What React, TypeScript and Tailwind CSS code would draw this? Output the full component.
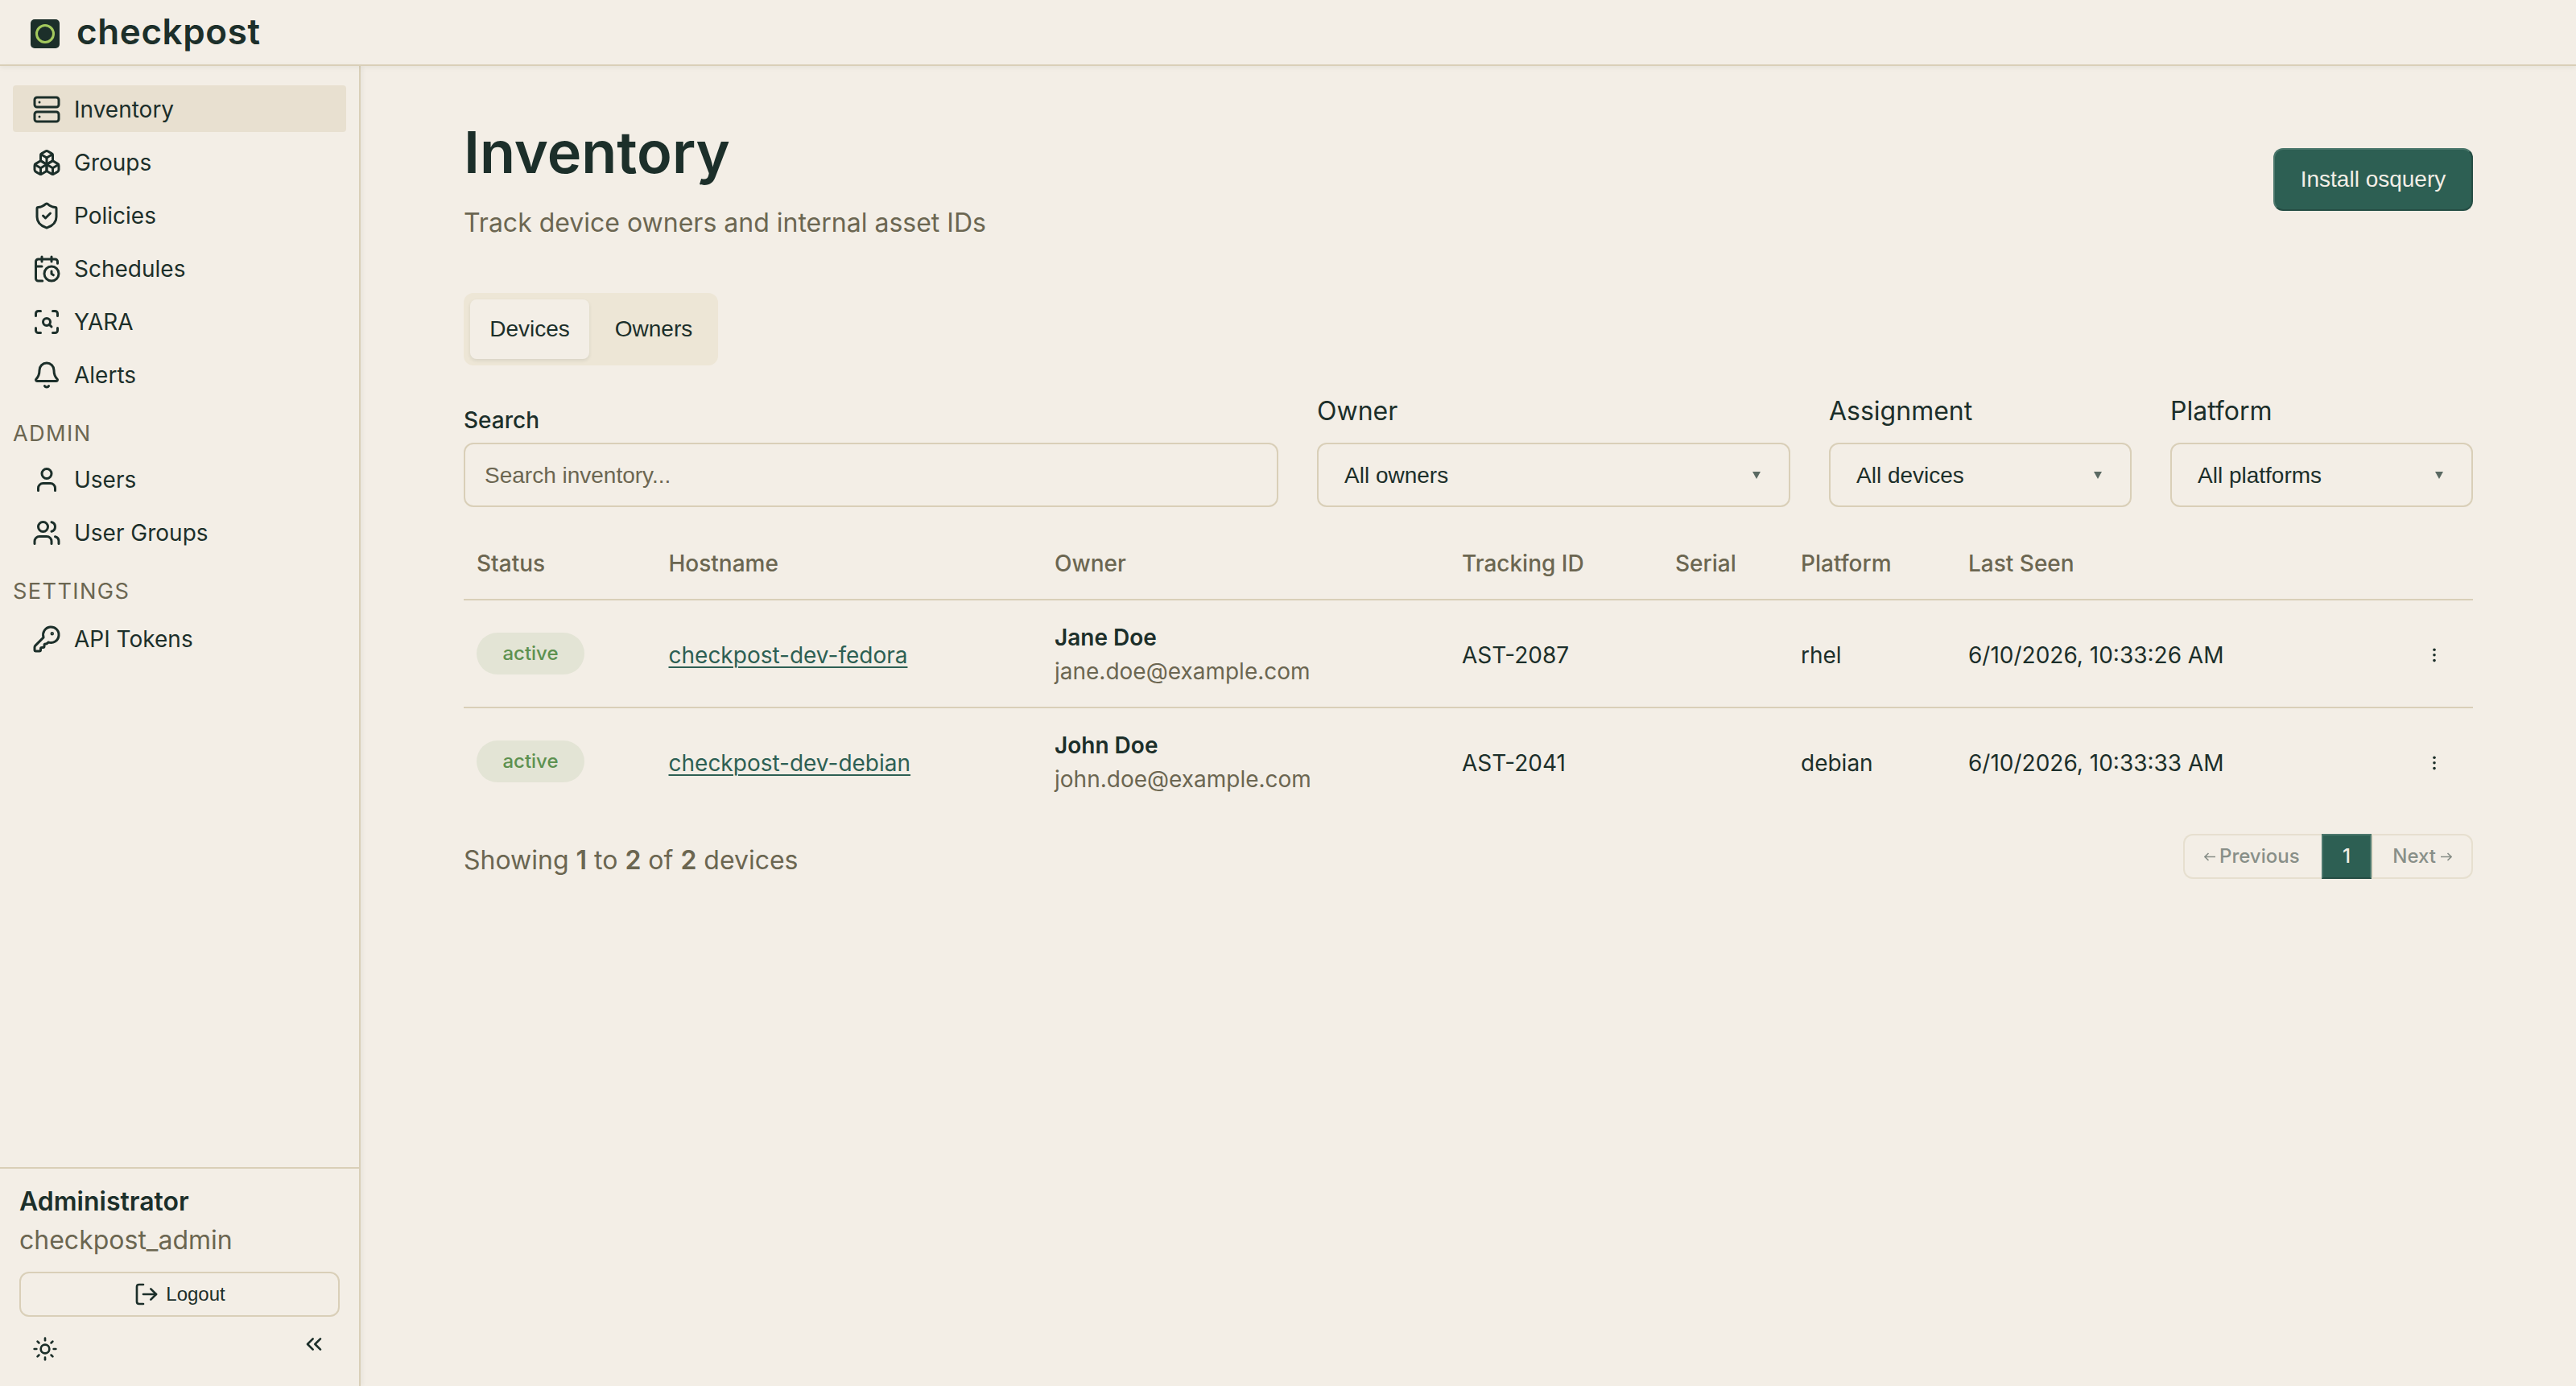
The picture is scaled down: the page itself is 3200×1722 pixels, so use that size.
import type { ReactNode } from 'react';
import {
  Bell,
  Boxes,
  CalendarClock,
  ChevronsLeft,
  KeyRound,
  LogOut,
  ScanSearch,
  Server,
  ShieldCheck,
  Sun,
  User,
  Users,
  type LucideIcon,
} from 'lucide-react';

interface NavItem {
  label: string;
  icon: LucideIcon;
  active?: boolean;
}

interface Device {
  hostname: string;
  owner: string;
  email: string;
  trackingId: string;
  serial: string;
  platform: string;
  lastSeen: string;
}

const mainNav: NavItem[] = [
  { label: 'Inventory', icon: Server, active: true },
  { label: 'Groups', icon: Boxes },
  { label: 'Policies', icon: ShieldCheck },
  { label: 'Schedules', icon: CalendarClock },
  { label: 'YARA', icon: ScanSearch },
  { label: 'Alerts', icon: Bell },
];

const adminNav: NavItem[] = [
  { label: 'Users', icon: User },
  { label: 'User Groups', icon: Users },
];

const settingsNav: NavItem[] = [{ label: 'API Tokens', icon: KeyRound }];

const devices: Device[] = [
  {
    hostname: 'checkpost-dev-fedora',
    owner: 'Jane Doe',
    email: 'jane.doe@example.com',
    trackingId: 'AST-2087',
    serial: '',
    platform: 'rhel',
    lastSeen: '6/10/2026, 10:33:26 AM',
  },
  {
    hostname: 'checkpost-dev-debian',
    owner: 'John Doe',
    email: 'john.doe@example.com',
    trackingId: 'AST-2041',
    serial: '',
    platform: 'debian',
    lastSeen: '6/10/2026, 10:33:33 AM',
  },
];

function NavList({ items }: { items: NavItem[] }) {
  return (
    <ul className="flex flex-col gap-2">
      {items.map(({ label, icon: Icon, active }) => (
        <li key={label}>
          <a
            className={`flex h-[58px] items-center gap-4 rounded-[4px] px-6 pt-px text-[28px] leading-[42px] ${
              active ? 'bg-[#e8e0d0]' : ''
            }`}
          >
            <Icon size={36} strokeWidth={2} />
            <span className="pt-px">{label}</span>
          </a>
        </li>
      ))}
    </ul>
  );
}

function NavHeading({ children }: { children: ReactNode }) {
  return (
    <h2 className="pt-0.5 text-[27.2px] leading-[42px] tracking-[0.05em] text-[#6b6651] uppercase">
      {children}
    </h2>
  );
}

function Sidebar() {
  return (
    <aside className="flex w-[448px] shrink-0 flex-col border-r-2 border-[#d9cfb8] shadow-[2px_0_6px_rgba(28,47,42,0.06)]">
      <nav className="flex-1 px-4 pt-6">
        <NavList items={mainNav} />
        <div className="mt-[22px] mb-[6px]">
          <NavHeading>Admin</NavHeading>
        </div>
        <NavList items={adminNav} />
        <div className="mt-[22px] mb-[8px]">
          <NavHeading>Settings</NavHeading>
        </div>
        <NavList items={settingsNav} />
      </nav>

      <div className="h-[272px] border-t-2 border-[#d9cfb8] px-6 pt-4">
        <div className="pt-px text-[32px] leading-[48px] font-semibold">Administrator</div>
        <div className="text-[32px] leading-[48px] text-[#6b6651]">checkpost_admin</div>
        <button className="mt-[15px] flex h-14 w-full items-center justify-center gap-2 rounded-xl border-2 border-[#d9cfb8] font-['Liberation_Sans',sans-serif] text-2xl leading-none">
          <LogOut size={32} strokeWidth={2} />
          Logout
        </button>
        <div className="flex items-start justify-between px-4 pt-[18px]">
          <Sun size={32} strokeWidth={2} className="mt-1.5" />
          <ChevronsLeft size={32} strokeWidth={2} />
        </div>
      </div>
    </aside>
  );
}

function SelectField({ label, value, className }: { label: string; value: string; className: string }) {
  return (
    <div className={className}>
      <div className="mb-[15px] pt-px text-[32px] leading-[48px]">{label}</div>
      <button className="flex h-20 w-full items-center justify-between rounded-xl border-2 border-[#d9cfb8] pt-px pr-[35px] pl-8 font-['Liberation_Sans',sans-serif] text-[28px] leading-none">
        <span>{value}</span>
        <svg width="10" height="9" viewBox="0 0 10 9" className="text-[#5a6962]">
          <path d="M0 0h10L5 9z" fill="currentColor" />
        </svg>
      </button>
    </div>
  );
}

function DeviceTable() {
  return (
    <table className="w-full table-fixed border-separate border-spacing-0 text-left text-[28px] leading-[42px]">
      <colgroup>
        <col className="w-[238.5px]" />
        <col className="w-[479.5px]" />
        <col className="w-[506px]" />
        <col className="w-[265px]" />
        <col className="w-[156px]" />
        <col className="w-[208px]" />
        <col />
        <col className="w-[96px]" />
      </colgroup>
      <thead>
        <tr className="text-[#6b6651]">
          {['Status', 'Hostname', 'Owner', 'Tracking ID', 'Serial', 'Platform', 'Last Seen', ''].map((title, i) => (
            <th key={i} className="h-[92px] border-b-2 border-[#d9cfb8] px-4 pt-0.5 font-medium">
              {title}
            </th>
          ))}
        </tr>
      </thead>
      <tbody>
        {devices.map((device) => (
          <tr
            key={device.hostname}
            className="last:[&>td]:h-[132px] [&>td]:border-[#d9cfb8] not-last:[&>td]:h-[134px] not-last:[&>td]:border-b-2"
          >
            <td className="px-4">
              <span className="flex h-[52px] w-[134px] items-center justify-center rounded-full bg-[#e3e4d5] pb-px text-2xl font-medium text-[#5d9150]">
                active
              </span>
            </td>
            <td className="px-4 pt-1">
              <a className="text-[#2d5f53] underline decoration-2 underline-offset-4">{device.hostname}</a>
            </td>
            <td className="px-4 pt-0.5">
              <div className="font-semibold">{device.owner}</div>
              <div className="text-[#6b6651]">{device.email}</div>
            </td>
            <td className="px-4 pt-1">{device.trackingId}</td>
            <td className="px-4 pt-1">{device.serial}</td>
            <td className="px-4 pt-1">{device.platform}</td>
            <td className="px-4 pt-1">{device.lastSeen}</td>
            <td className="pt-1">
              <svg width="4" height="18" viewBox="0 0 4 18" className="mx-auto" fill="currentColor">
                <circle cx="2" cy="2.2" r="1.8" />
                <circle cx="2" cy="8.8" r="1.8" />
                <circle cx="2" cy="15.6" r="1.8" />
              </svg>
            </td>
          </tr>
        ))}
      </tbody>
    </table>
  );
}

function PageArrow({ className }: { className?: string }) {
  return (
    <svg
      width="14"
      height="11"
      viewBox="0 0 14 11"
      fill="none"
      stroke="currentColor"
      strokeWidth="1.6"
      className={`shrink-0 ${className ?? ''}`}
    >
      <path d="M0 5.5h13M8.5 1l4.5 4.5L8.5 10" />
    </svg>
  );
}

export default function App() {
  return (
    <div className="flex h-[1722px] w-[3200px] flex-col overflow-hidden bg-[#f3eee6] font-['Inter',sans-serif] text-[#1c2f2a]">
      <header className="relative z-10 flex h-[82px] shrink-0 items-center border-b-2 border-[#d9cfb8] pl-[38px] shadow-[0_2px_6px_rgba(28,47,42,0.06)]">
        <svg width="36" height="36" viewBox="0 0 36 36" className="mt-[3px]">
          <rect width="36" height="36" rx="5" fill="#1c2f2a" />
          <circle cx="18" cy="18" r="10.5" fill="none" stroke="#a3c95d" strokeWidth="3" />
        </svg>
        <span className="mb-[3px] ml-[21px] text-[44px] leading-none font-semibold tracking-[0.6px]">checkpost</span>
      </header>

      <div className="flex min-h-0 flex-1">
        <Sidebar />

        <main className="flex-1 px-32 pt-16">
          {/* Title */}
          <div className="flex h-[154px] items-center justify-between">
            <div>
              <h1 className="text-[72px] leading-[86px] font-semibold">Inventory</h1>
              <p className="mt-5 pt-0.5 text-[32px] leading-[46px] text-[#6b6651]">
                Track device owners and internal asset IDs
              </p>
            </div>
            <button className="h-[78px] w-[248px] rounded-xl border-2 border-t-[#4b776c] border-r-[#254d44] border-b-[#254d44] border-l-[#4b776c] bg-[#2d5f53] font-['Liberation_Sans',sans-serif] text-[28px] leading-none text-[#f3eee6]">
              Install osquery
            </button>
          </div>

          {/* Tabs */}
          <div className="mt-16 flex h-[90px] w-[316px] gap-2 rounded-xl bg-[#ede6d6] p-2 font-['Liberation_Sans',sans-serif] text-[28px] leading-none">
            <button className="w-[148px] rounded-lg bg-[#f3eee6] shadow-[0_2px_4px_rgba(28,47,42,0.1)]">Devices</button>
            <button className="flex-1">Owners</button>
          </div>

          {/* Filters */}
          <div className="mt-8 flex items-end gap-12">
            <div className="w-[1012px]">
              <div className="mb-[7px] text-[28px] leading-[42px] font-medium">Search</div>
              <div className="flex h-20 items-center rounded-xl border-2 border-[#d9cfb8] px-6 pt-px font-['Liberation_Sans',sans-serif] text-[28px] leading-none text-[#6b6651]">
                Search inventory...
              </div>
            </div>
            <SelectField label="Owner" value="All owners" className="w-[588px]" />
            <SelectField label="Assignment" value="All devices" className="w-[376px]" />
            <SelectField label="Platform" value="All platforms" className="w-[376px]" />
          </div>

          <div className="mt-6">
            <DeviceTable />
          </div>

          {/* Pagination */}
          <div className="mt-6 flex h-14 items-start justify-between">
            <p className="pt-[9px] text-[32px] leading-[48px] text-[#6b6651]">
              Showing <strong className="font-semibold">1</strong> to <strong className="font-semibold">2</strong> of{' '}
              <strong className="font-semibold">2</strong> devices
            </p>
            <div className="flex h-14 text-2xl leading-none font-medium">
              <button className="flex w-[172px] items-center gap-[5px] rounded-l-xl border-2 border-r-0 border-[#e6dfcf] pl-6 text-[#888f88]">
                <PageArrow className="rotate-180" />
                Previous
              </button>
              <button className="w-[62px] border-2 border-t-[#4b776c] border-r-[#4b776c] border-b-[#254d44] border-l-[#4b776c] bg-[#2d5f53] text-[#f3eee6]">
                1
              </button>
              <button className="flex w-[126px] items-center justify-end gap-1.5 rounded-r-xl border-2 border-[#e6dfcf] pr-6 text-[#888f88]">
                Next
                <PageArrow />
              </button>
            </div>
          </div>
        </main>
      </div>
    </div>
  );
}
